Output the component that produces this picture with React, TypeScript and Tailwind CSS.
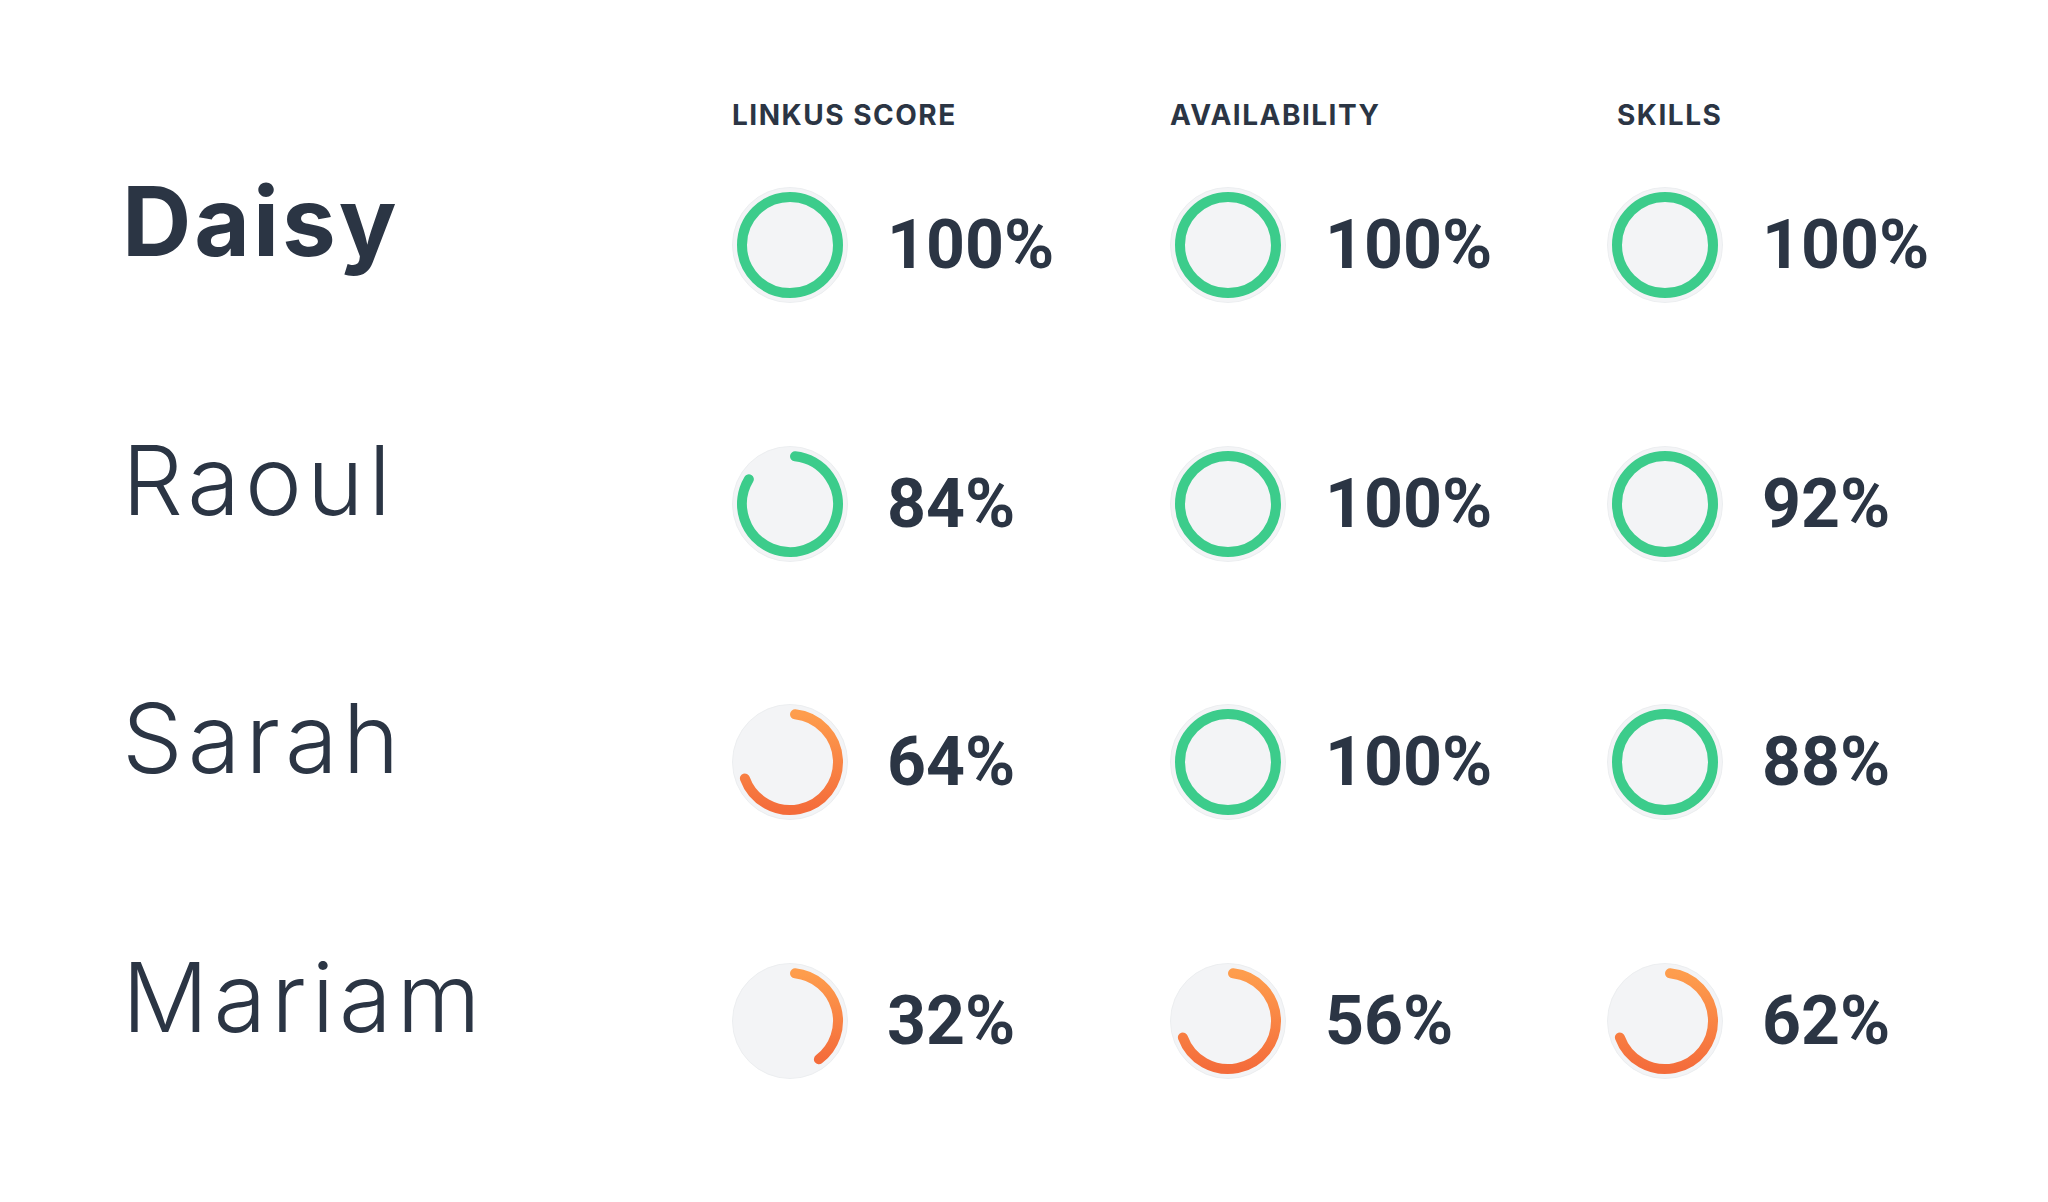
import React from "react";

type Cell = { value: number; tip: number };
type Row = { name: string; bold?: boolean; cells: Cell[] };

const rows: Row[] = [
  { name: "Daisy", bold: true, cells: [{ value: 100, tip: 360 }, { value: 100, tip: 360 }, { value: 100, tip: 360 }] },
  { name: "Raoul", cells: [{ value: 84, tip: 307 }, { value: 100, tip: 360 }, { value: 92, tip: 360 }] },
  { name: "Sarah", cells: [{ value: 64, tip: 256 }, { value: 100, tip: 360 }, { value: 88, tip: 360 }] },
  { name: "Mariam", cells: [{ value: 32, tip: 149 }, { value: 56, tip: 256 }, { value: 62, tip: 256 }] },
];

function pt(a: number, r: number) {
  const rad = (a * Math.PI) / 180;
  return [58 + r * Math.sin(rad), 58 - r * Math.cos(rad)];
}

function Ring({ tip, id, green }: { tip: number; id: string; green: boolean }) {
  const r = 48;
  const full = tip >= 360;
  const a0 = 6;
  const a1 = tip - 6;
  const [x0, y0] = pt(a0, r);
  const [x1, y1] = pt(a1, r);
  const large = a1 - a0 > 180 ? 1 : 0;
  const stroke = green ? "#3ccc8b" : `url(#${id})`;
  return (
    <svg width="116" height="116" viewBox="0 0 116 116" className="shrink-0">
      <defs>
        <linearGradient id={id} x1="0" y1="0" x2="0" y2="1">
          <stop offset="0%" stopColor="#fe9d4d" />
          <stop offset="100%" stopColor="#f46c3b" />
        </linearGradient>
      </defs>
      <circle cx="58" cy="58" r="57.5" fill="#f3f4f6" stroke="#eceef0" strokeWidth="1" />
      {full ? (
        <circle cx="58" cy="58" r={r} fill="none" stroke={stroke} strokeWidth="10" />
      ) : (
        <path
          d={`M ${x0} ${y0} A ${r} ${r} 0 ${large} 1 ${x1} ${y1}`}
          fill="none"
          stroke={stroke}
          strokeWidth="10"
          strokeLinecap="round"
        />
      )}
    </svg>
  );
}

export default function App() {
  return (
    <div className="w-[2048px] h-[1202px] bg-white text-[#2b3544] pl-[122px] pt-[101px]">
      <div className="grid grid-cols-[610px_438px_437px_auto] h-[26px] items-center font-['Inter',sans-serif] font-bold text-[28px] leading-none tracking-[1.5px]">
        <div />
        <div>LINKUS SCORE</div>
        <div>AVAILABILITY</div>
        <div className="pl-[10px]">SKILLS</div>
      </div>
      <div className="mt-[60px] flex flex-col gap-[142.5px]">
        {rows.map((row, ri) => (
          <div key={row.name} className="grid grid-cols-[610px_438px_437px_auto] h-[116px] items-center">
            <div
              className={
                row.bold
                  ? "self-start -mt-[14px] font-['Inter',sans-serif] font-bold text-[96px] leading-none tracking-[3px]"
                  : "self-start -mt-[14px] font-['Inter',sans-serif] font-light text-[96px] leading-none tracking-[5px]"
              }
            >
              {row.name}
            </div>
            {row.cells.map((c, ci) => (
              <div key={ci} className="flex items-center">
                <Ring tip={c.tip} id={`g${ri}${ci}`} green={c.value >= 80} />
                <span className="ml-[39px] font-['Roboto',sans-serif] font-bold text-[68px] leading-none">
                  {c.value}%
                </span>
              </div>
            ))}
          </div>
        ))}
      </div>
    </div>
  );
}
